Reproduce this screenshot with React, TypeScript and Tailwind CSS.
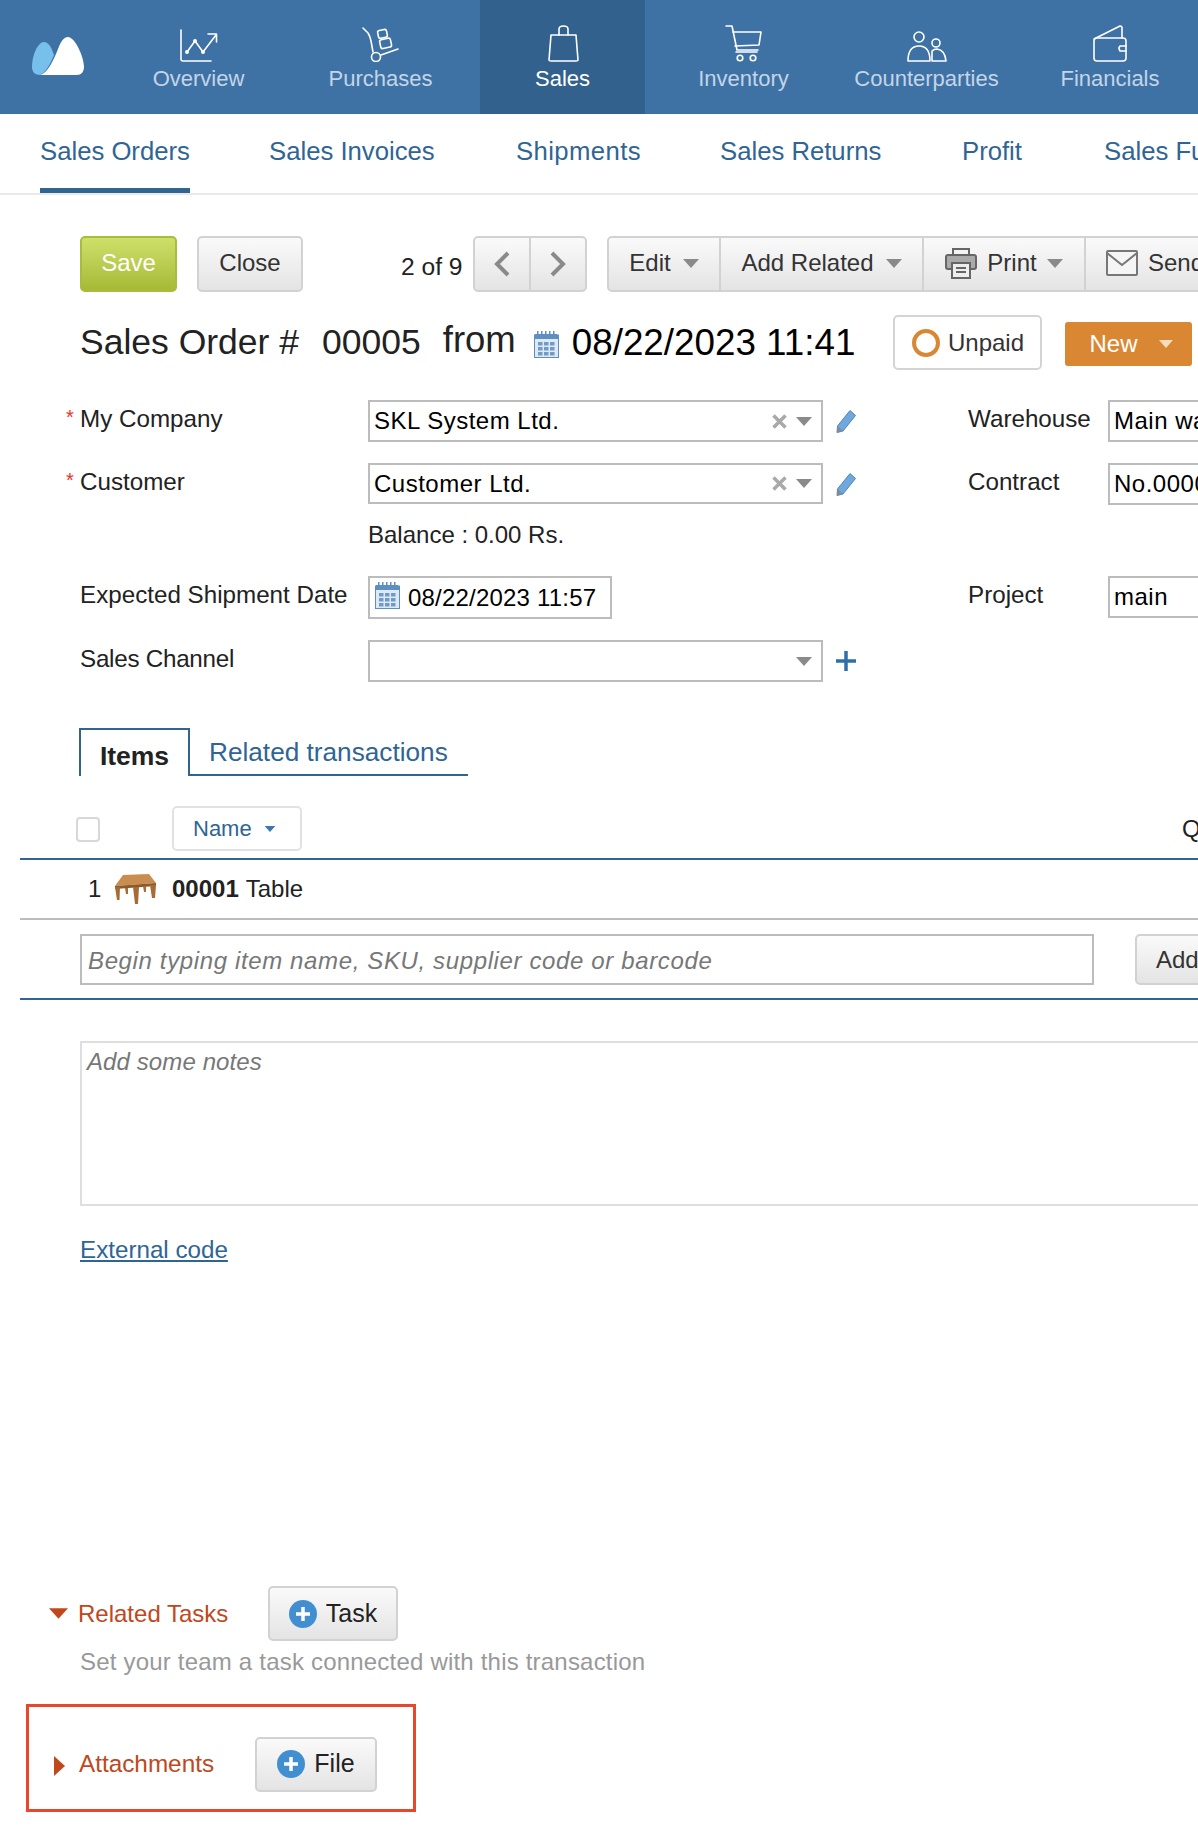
import type { ReactNode } from 'react';

const BTN = 'bg-linear-to-b from-[#fafafa] to-[#e4e4e4] border-2 border-[#d2d2d2] rounded-[5px] shrink-0';

function Caret({ className = 'text-[#8a8a8a]', w = 16, h = 9 }: { className?: string; w?: number; h?: number }) {
  return (
    <svg width={w} height={h} viewBox="0 0 16 9" className={`shrink-0 ${className}`}>
      <path d="M0 0H16L8 9Z" fill="currentColor" />
    </svg>
  );
}

function Calendar({ className = '' }: { className?: string }) {
  return (
    <svg width="25" height="27" viewBox="0 0 25 27" className={`shrink-0 ${className}`}>
      <path d="M3 0h1.500v3H7V0h1.500v3H11V0h1.500v3H15V0h1.500v3H19V0h1.500v3H23V5H1V3h2Z" fill="#5d8fc0" />
      <rect x="0.500" y="4" width="24" height="22.500" fill="#dfe9f4" stroke="#5d8fc0" />
      <rect x="0" y="4" width="25" height="4" fill="#5d8fc0" />
      {[4, 10, 16].map((x) => [11, 16, 21].map((y) => <rect key={`${x}-${y}`} x={x} y={y} width="4.500" height="3.500" fill="#6f9bc8" />))}
    </svg>
  );
}

function Pencil() {
  return (
    <svg width="21" height="24" viewBox="0 0 21 24">
      <path d="M14 1.500L19.500 6.500L7 22L1 23.500L1.500 17Z" fill="#6ea8dc" stroke="#4f86b8" />
      <path d="M1.500 17L7 22L1 23.500Z" fill="#7f8c99" />
    </svg>
  );
}

function PlusCircle() {
  return (
    <svg width="28" height="28" viewBox="0 0 28 28" className="shrink-0">
      <circle cx="14" cy="14" r="14" fill="#418fd1" />
      <path d="M14 7V21M7 14H21" stroke="#fff" strokeWidth="3.500" />
    </svg>
  );
}

const stroke = { fill: 'none', stroke: '#fff', strokeWidth: 1.6, strokeLinecap: 'round' as const, strokeLinejoin: 'round' as const };

const navItems: { label: string; width: string; active?: boolean; icon: ReactNode }[] = [
  {
    label: 'Overview',
    width: 'w-[183px]',
    icon: (
      <svg width="38" height="33" viewBox="0 0 38 33" {...stroke}>
        <path d="M1 1V30Q1 32 3 32H31" />
        <path d="M7 23L15 12L23 23L36 6" />
        <path d="M28 5H36.500V13" />
        <circle cx="7" cy="23" r="1.200" fill="#fff" />
        <circle cx="15" cy="12" r="1.200" fill="#fff" />
        <circle cx="23" cy="23" r="1.200" fill="#fff" />
      </svg>
    ),
  },
  {
    label: 'Purchases',
    width: 'w-[181px] mr-[9px]',
    icon: (
      <svg width="38" height="35" viewBox="0 0 38 35" {...stroke}>
        <path d="M1 1L6 6Q8 9 9 14L11 25" />
        <circle cx="14" cy="30" r="4.500" />
        <path d="M19 28L36 22" />
        <rect x="16" y="3" width="9" height="8" rx="2" transform="rotate(-12 20 7)" />
        <rect x="18" y="12" width="11" height="9" rx="2" transform="rotate(-12 23 16)" />
      </svg>
    ),
  },
  {
    label: 'Sales',
    width: 'w-[165px]',
    active: true,
    icon: (
      <svg width="31" height="37" viewBox="0 0 31 37" className="ml-[2px]" {...stroke}>
        <path d="M3 10H28L30 35Q30 36 28 36H3Q1 36 1 35Z" />
        <path d="M11 10V4Q11 1 15.500 1Q20 1 20 4V10" />
      </svg>
    ),
  },
  {
    label: 'Inventory',
    width: 'w-[197px]',
    icon: (
      <svg width="38" height="37" viewBox="0 0 38 37" {...stroke}>
        <path d="M1 1H7L12 25H33" />
        <path d="M8 7H36L34 20L10 21" />
        <path d="M11 27H32" />
        <circle cx="15" cy="33" r="2.800" />
        <circle cx="28" cy="33" r="2.800" />
      </svg>
    ),
  },
  {
    label: 'Counterparties',
    width: 'w-[169px]',
    icon: (
      <svg width="40" height="31" viewBox="0 0 40 31" {...stroke}>
        <circle cx="12" cy="6" r="5" />
        <circle cx="29" cy="12" r="4" />
        <path d="M1 30Q1 15 12 15Q23 15 23 30Z" />
        <path d="M25 30V20Q27 18 30 18Q38 19 39 30Z" />
      </svg>
    ),
  },
  {
    label: 'Financials',
    width: 'w-[198px]',
    icon: (
      <svg width="36" height="37" viewBox="0 0 36 37" {...stroke}>
        <path d="M2 14L28 1Q30 1 30 3V13" />
        <path d="M2 16Q2 13 5 13H31Q34 13 34 16V33Q34 36 31 36H5Q2 36 2 33Z" />
        <path d="M34 21H28Q26 23 28 26H34" />
      </svg>
    ),
  },
];

const subItems = [
  { label: 'Sales Orders', className: 'w-[150px] mr-[79px] border-b-[5px] border-[#31648f]' },
  { label: 'Sales Invoices', className: 'w-[247px]' },
  { label: 'Shipments', className: 'w-[204px] tracking-[0.4px]' },
  { label: 'Sales Returns', className: 'w-[242px]' },
  { label: 'Profit', className: 'w-[142px]' },
  { label: 'Sales Funnel', className: 'w-[150px]' },
];

function TopNav() {
  return (
    <div className="flex h-[114px] bg-[#3e72a5]">
      <div className="w-[107px] pl-[32px] pt-[37px] shrink-0">
        <svg width="52" height="38" viewBox="0 0 52 38">
          <path d="M8 38C16 36 22 22 26 12C29 4 32 0 36 0C43 0 52 20 52 30C52 35 49 38 45 38Z" fill="#fff" />
          <path d="M0 30C0 18 6 5 12 5C17 5 20 12 22 18C18 28 13 36 8 38C3 38 0 35 0 30Z" fill="#78c0ec" />
        </svg>
      </div>
      {navItems.map((item) => (
        <div
          key={item.label}
          className={`${item.width} shrink-0 flex flex-col items-center ${item.active ? 'bg-[#31618c] text-white' : 'text-[#c3d5e8]'}`}
        >
          <div className="h-[63px] flex items-end pb-[1px]">{item.icon}</div>
          <div className="text-[22px] leading-[32px]">{item.label}</div>
        </div>
      ))}
    </div>
  );
}

function SubNav() {
  return (
    <div className="flex h-[81px] pl-[40px] border-b-2 border-[#e9e9e9] whitespace-nowrap text-[25.700px] text-[#2f6595]">
      {subItems.map((item) => (
        <div key={item.label} className={`pt-[18px] shrink-0 ${item.className}`}>
          {item.label}
        </div>
      ))}
    </div>
  );
}

function Toolbar() {
  return (
    <div className="flex items-center h-[56px] mt-[41px] pl-[80px] text-[24px] whitespace-nowrap">
      <div className="w-[97px] h-full shrink-0 flex items-center justify-center pb-[2px] rounded-[5px] border-2 border-[#a9bc3c] bg-linear-to-b from-[#cfe06a] to-[#a6ba36] text-white">
        Save
      </div>
      <div className={`${BTN} w-[106px] h-full ml-[20px] flex items-center justify-center pb-[2px] text-[#333]`}>Close</div>
      <div className="ml-[98px] w-[72px] pt-[6px] shrink-0 text-[24.600px] text-[#222]">2 of 9</div>
      <div className={`${BTN} w-[114px] h-full flex`}>
        <div className="w-[56px] flex items-center justify-center border-r-2 border-[#d2d2d2]">
          <svg width="16" height="26" viewBox="0 0 16 26" fill="none" stroke="#8a8a8a" strokeWidth="4">
            <path d="M14 2L3 13L14 24" />
          </svg>
        </div>
        <div className="flex-1 flex items-center justify-center">
          <svg width="16" height="26" viewBox="0 0 16 26" fill="none" stroke="#8a8a8a" strokeWidth="4">
            <path d="M2 2L13 13L2 24" />
          </svg>
        </div>
      </div>
      <div className={`${BTN} h-full ml-[20px] flex w-[700px] text-[#333]`}>
        <div className="w-[112px] flex items-center justify-center gap-[12px] pb-[2px] border-r-2 border-[#d2d2d2]">
          Edit <Caret />
        </div>
        <div className="w-[203px] flex items-center justify-center gap-[12px] pb-[2px] border-r-2 border-[#d2d2d2]">
          Add Related <Caret />
        </div>
        <div className="w-[162px] flex items-center justify-center gap-[10px] pb-[2px] border-r-2 border-[#d2d2d2]">
          <svg width="32" height="32" viewBox="0 0 32 32" fill="none" stroke="#666" strokeWidth="2">
            <path d="M8 8V2H24V8" />
            <path d="M7 22H3Q1 22 1 20V10Q1 8 3 8H29Q31 8 31 10V20Q31 22 29 22H25" fill="#aaa" />
            <rect x="7" y="16" width="18" height="15" fill="#eee" />
            <path d="M11 21H21M11 25H21" />
          </svg>
          Print <Caret />
        </div>
        <div className="pl-[20px] flex items-center gap-[10px] pb-[2px]">
          <svg width="32" height="27" viewBox="0 0 32 27" fill="none" stroke="#777" strokeWidth="2">
            <rect x="1" y="1" width="30" height="24" rx="1" fill="#f5f5f5" />
            <path d="M1 3L16 15L31 3" />
          </svg>
          Send
        </div>
      </div>
    </div>
  );
}

function TitleRow() {
  return (
    <div className="flex items-center h-[55px] mt-[23px] pl-[80px] whitespace-nowrap">
      <span className="text-[35.500px] text-[#222] shrink-0">Sales Order #</span>
      <span className="text-[35.500px] text-[#222] ml-[23px] shrink-0">00005</span>
      <span className="text-[36.500px] text-[#222] ml-[22px] -mt-[4px] shrink-0">from</span>
      <Calendar className="ml-[18px] mt-[4px]" />
      <span className="text-[36.800px] text-black ml-[13px] shrink-0">08/22/2023 11:41</span>
      <div className="ml-[38px] w-[149px] h-full shrink-0 flex items-center justify-center gap-[8px] border-2 border-[#d4d4d4] rounded-[5px] text-[24px] text-[#333]">
        <span className="w-[28px] h-[28px] rounded-full border-[4px] border-[#da8734]" />
        Unpaid
      </div>
      <div className="ml-[23px] w-[127px] h-[44px] mt-[2px] pl-[24px] shrink-0 flex items-center gap-[21px] rounded-[3px] bg-[#da8734] text-white text-[24px]">
        New <Caret className="text-[#f5dcc0]" w={14} h={8} />
      </div>
    </div>
  );
}

function FieldBox({ className = '', children }: { className?: string; children?: ReactNode }) {
  return (
    <div className={`border-2 border-[#bcbcbc] flex items-center pl-[4px] text-[24px] text-black overflow-hidden whitespace-nowrap ${className}`}>
      {children}
    </div>
  );
}

function Select({ value, clearable = true }: { value?: string; clearable?: boolean }) {
  return (
    <FieldBox className="w-[455px] h-full tracking-[0.5px]">
      <span className="flex-1">{value}</span>
      {clearable && (
        <svg width="15" height="15" viewBox="0 0 15 15" stroke="#a9a9a9" strokeWidth="3.500" className="mr-[9px]">
          <path d="M1.500 1.500L13.500 13.500M13.500 1.500L1.500 13.500" />
        </svg>
      )}
      <Caret className="text-[#8a8a8a] mr-[9px]" />
    </FieldBox>
  );
}

function FormRow(props: {
  className: string;
  label: string;
  required?: boolean;
  field: ReactNode;
  action?: ReactNode;
  rightLabel?: string;
  rightValue?: string;
}) {
  return (
    <div className={`flex whitespace-nowrap text-[24.200px] text-[#222] ${props.className}`}>
      <div className="relative ml-[80px] w-[288px] shrink-0 leading-[38px]">
        {props.required && <span className="absolute -left-[14px] -top-[2px] text-[#e8322a] text-[20px]">*</span>}
        {props.label}
      </div>
      <div className="w-[468px] flex items-start shrink-0">{props.field}</div>
      <div className="w-[132px] h-full flex items-center shrink-0">{props.action}</div>
      {props.rightLabel && (
        <>
          <div className="w-[140px] shrink-0 leading-[38px]">{props.rightLabel}</div>
          <FieldBox className="w-[200px] h-[42px] shrink-0 tracking-[0.5px]">{props.rightValue}</FieldBox>
        </>
      )}
    </div>
  );
}

function Form() {
  return (
    <div className="mt-[30px]">
      <FormRow className="h-[42px]" label="My Company" required field={<Select value="SKL System Ltd." />} action={<Pencil />} rightLabel="Warehouse" rightValue="Main warehouse" />
      <FormRow className="h-[41px] mt-[21px]" label="Customer" required field={<Select value="Customer Ltd." />} action={<Pencil />} rightLabel="Contract" rightValue="No.00001" />
      <div className="ml-[368px] mt-[16px] h-[30px] leading-[30px] text-[24px] text-[#222]">Balance : 0.00 Rs.</div>
      <FormRow
        className="h-[43px] mt-[26px]"
        label="Expected Shipment Date"
        field={
          <FieldBox className="w-[244px] h-full pl-[5px] gap-[8px] tracking-[0.2px]">
            <Calendar className="-mt-[4px]" />
            08/22/2023 11:57
          </FieldBox>
        }
        rightLabel="Project"
        rightValue="main"
      />
      <FormRow
        className="h-[42px] mt-[21px] tracking-[-0.25px]"
        label="Sales Channel"
        field={<Select clearable={false} />}
        action={
          <svg width="20" height="20" viewBox="0 0 20 20" stroke="#2f6fa8" strokeWidth="3.500">
            <path d="M10 0V20M0 10H20" />
          </svg>
        }
      />
    </div>
  );
}

function ItemsTable() {
  return (
    <div className="text-[24px] whitespace-nowrap">
      <div className="flex mt-[46px] ml-[79px] h-[48px]">
        <div className="w-[111px] border-2 border-b-0 border-[#31648f] flex items-center justify-center pt-[8px] text-[26.500px] font-bold text-[#222]">Items</div>
        <div className="w-[278px] border-b-2 border-[#31648f] pl-[19px] leading-[48px] text-[26.200px] text-[#2f6595]">Related transactions</div>
      </div>
      <div className="flex items-start ml-[20px] pl-[56px] pt-[30px] h-[84px] border-b-2 border-[#31648f]">
        <div className="w-[24px] h-[25px] mt-[11px] shrink-0 rounded-[4px] border-2 border-[#d8d8d8]" />
        <div className="w-[130px] h-[45px] ml-[72px] pl-[19px] shrink-0 flex items-center gap-[12px] rounded-[5px] border-2 border-[#e2e2e2] text-[22px] text-[#2f6595]">
          Name <Caret className="text-[#3c78ad]" w={12} h={6} />
        </div>
        <div className="ml-[880px] pt-[5px] text-[#222]">Q</div>
      </div>
      <div className="flex items-center ml-[20px] pl-[68px] h-[60px] border-b-2 border-[#bcbcbc] text-[#222]">
        <span className="w-[24px]">1</span>
        <svg width="46" height="30" viewBox="0 0 44 30" className="shrink-0">
          <path d="M10 1L36 0L43 9L2 12Z" fill="#c98d50" />
          <path d="M2 12L43 9V12L2 15Z" fill="#8f5a2b" />
          <path d="M2 13H7L6.500 26H4ZM37 11H43L42 24H39ZM20 13H26L25 30H22ZM12 14H15V20H13ZM30 12H33V18H31Z" fill="#a56c36" />
        </svg>
        <span className="ml-[14px] font-bold">00001</span>
        <span className="ml-[7px]">Table</span>
      </div>
      <div className="flex ml-[20px] pl-[60px] pt-[14px] h-[80px] border-b-2 border-[#31648f]">
        <div className="w-[1014px] h-[51px] border-2 border-[#bcbcbc] flex items-center pl-[6px] pt-[2px] italic text-[#777] tracking-[0.63px] shrink-0">
          Begin typing item name, SKU, supplier code or barcode
        </div>
        <div className={`${BTN} w-[100px] h-[51px] ml-[41px] pl-[19px] flex items-center text-[#333]`}>Add</div>
      </div>
    </div>
  );
}

function SectionButton({ label, className }: { label: string; className: string }) {
  return (
    <div className={`${BTN} h-[55px] flex items-center justify-center gap-[9px] text-[25px] text-[#222] ${className}`}>
      <PlusCircle />
      {label}
    </div>
  );
}

export default function App() {
  return (
    <div className="w-[1198px] h-[1842px] overflow-hidden bg-white font-['Liberation_Sans',Arial,sans-serif]">
      <TopNav />
      <SubNav />
      <Toolbar />
      <TitleRow />
      <Form />
      <ItemsTable />
      <div className="ml-[80px] mt-[41px] h-[165px] border-l-2 border-t-2 border-b-2 border-[#dedede] pl-[5px] pt-[1px] text-[24px] tracking-[0.1px] italic text-[#777]">
        Add some notes
      </div>
      <div className="ml-[80px] mt-[27px] h-[34px] leading-[34px] text-[24.200px] text-[#2f6595] underline">External code</div>
      <div className="flex items-center h-[55px] mt-[319px] pl-[49px] text-[24px] text-[#c0481c]">
        <Caret className="text-[#c0481c]" w={19} h={11} />
        <span className="ml-[10px] w-[190px]">Related Tasks</span>
        <SectionButton label="Task" className="w-[130px]" />
      </div>
      <div className="ml-[80px] h-[34px] mt-[4px] leading-[34px] text-[24px] tracking-[0.2px] text-[#999]">Set your team a task connected with this transaction</div>
      <div className="flex items-center w-[390px] h-[108px] ml-[26px] mt-[25px] pl-[25px] pt-[12px] border-[3px] border-[#e8472b] text-[24.300px] text-[#c0481c]">
        <svg width="11" height="20" viewBox="0 0 11 20" className="mt-[3px]">
          <path d="M0 0L11 10L0 20Z" fill="#c0481c" />
        </svg>
        <span className="ml-[14px] w-[176px]">Attachments</span>
        <SectionButton label="File" className="w-[122px]" />
      </div>
    </div>
  );
}
